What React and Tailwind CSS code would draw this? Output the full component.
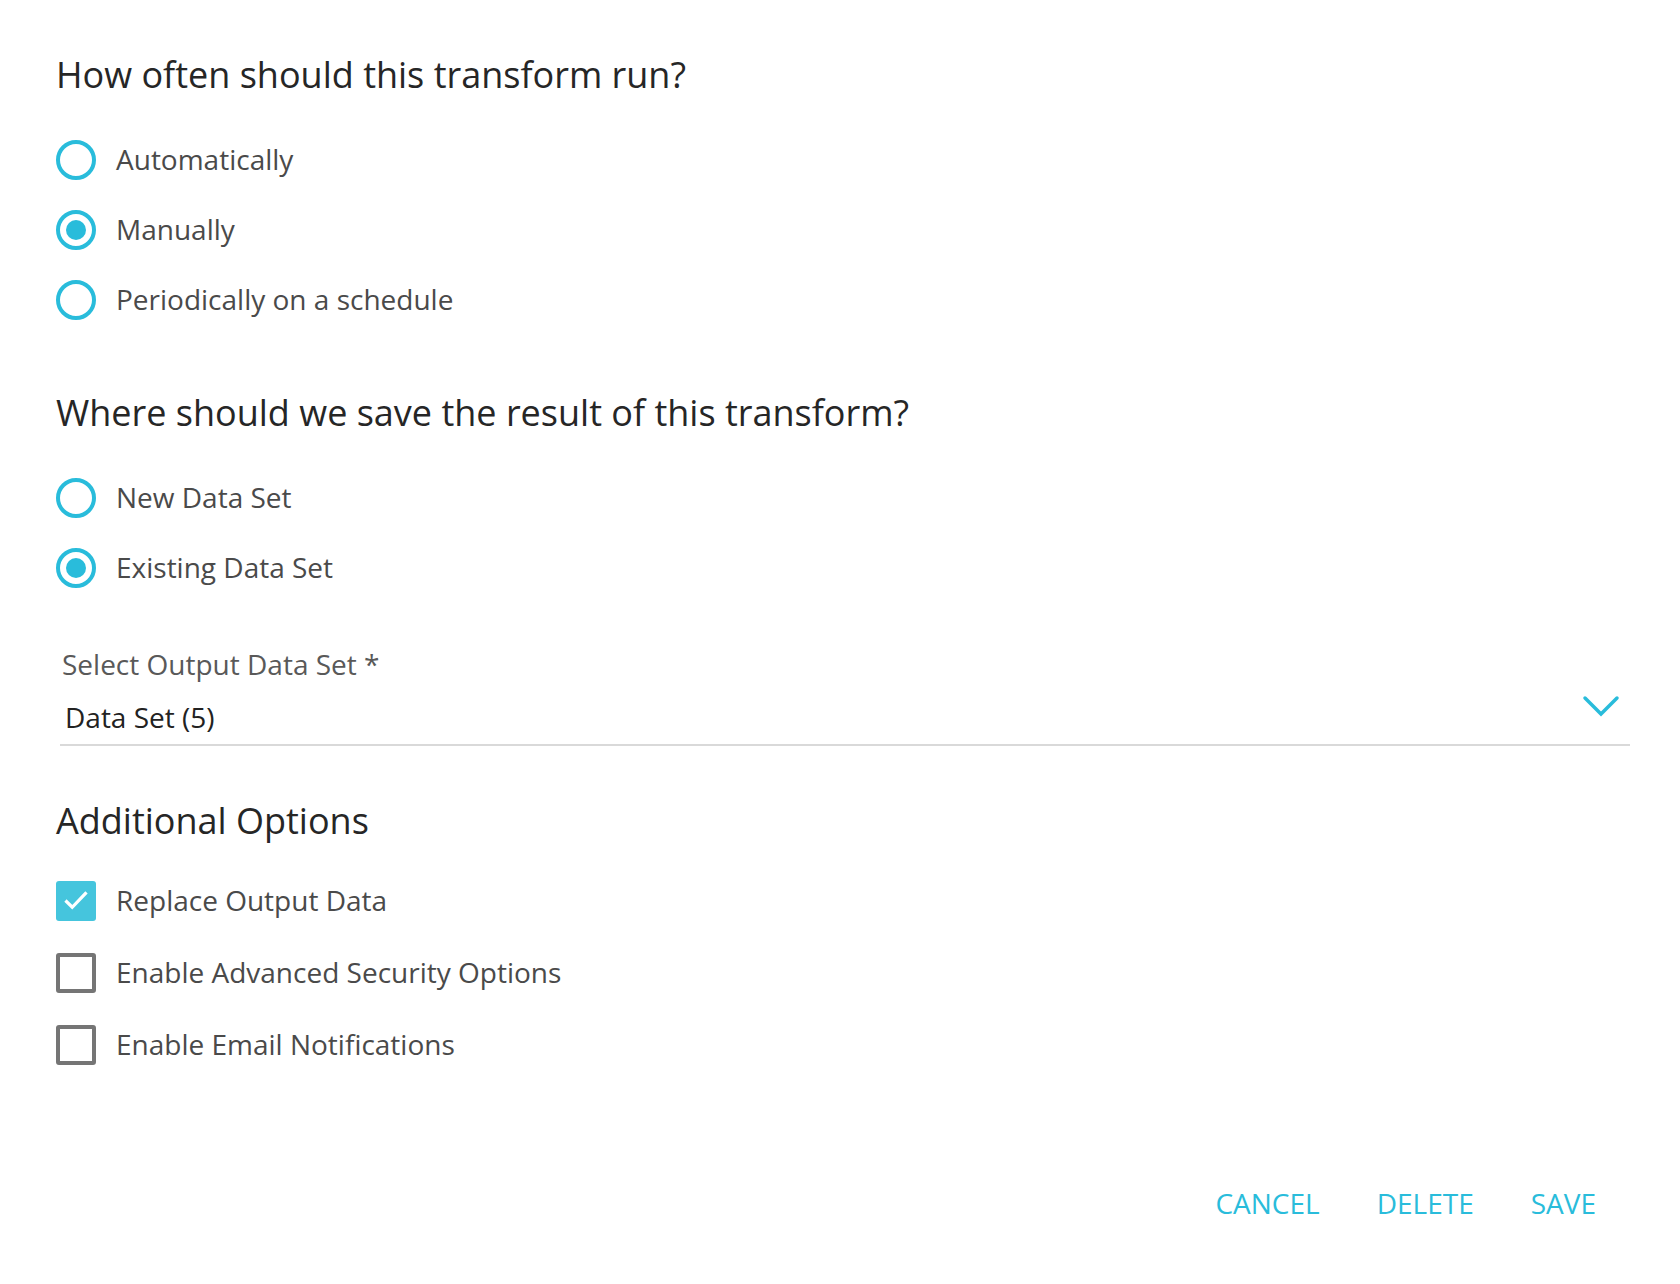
import { useState } from "react";

const CYAN = "#29bcdb";

const Radio = ({ label, checked, onClick }) => (
  <button type="button" onClick={onClick} className="flex h-[70px] items-center gap-[20px] text-left">
    <span className="flex h-[40px] w-[40px] items-center justify-center rounded-full border-[4px] border-[#29bcdb]">
      {checked && <span className="h-[20px] w-[20px] rounded-full bg-[#29bcdb]" />}
    </span>
    <span className="mt-[-2px] text-[28px] text-[#4a4a4a]">{label}</span>
  </button>
);

const Checkbox = ({ label, checked, onClick }) => (
  <button type="button" onClick={onClick} className="flex h-[72px] items-center gap-[20px] text-left">
    {checked ? (
      <span className="flex h-[40px] w-[40px] items-center justify-center rounded-[3px] bg-[#45c5dd]">
        <svg width="30" height="30" viewBox="0 0 24 24" fill="none" stroke="white" strokeWidth="2.6" strokeLinecap="square">
          <path d="M4.5 12.5l4.5 4.5L19.5 6" />
        </svg>
      </span>
    ) : (
      <span className="h-[40px] w-[40px] rounded-[3px] border-[4px] border-[#757575]" />
    )}
    <span className="mt-[-2px] text-[28px] text-[#4a4a4a]">{label}</span>
  </button>
);

const App = () => {
  const [runMode, setRunMode] = useState("manual");
  const [target, setTarget] = useState("existing");
  const [options, setOptions] = useState({ replace: true, security: false, email: false });

  const toggle = (key) => setOptions((prev) => ({ ...prev, [key]: !prev[key] }));

  return (
    <div className="h-[1284px] w-[1680px] bg-white pl-[56px] pt-[52px] font-['Open_Sans',sans-serif]">
      <h2 className="text-[36px] leading-[46px] text-[#262626]">How often should this transform run?</h2>
      <div className="mt-[27px] flex flex-col items-start">
        <Radio label="Automatically" checked={runMode === "auto"} onClick={() => setRunMode("auto")} />
        <Radio label="Manually" checked={runMode === "manual"} onClick={() => setRunMode("manual")} />
        <Radio
          label="Periodically on a schedule"
          checked={runMode === "schedule"}
          onClick={() => setRunMode("schedule")}
        />
      </div>

      <h2 className="mt-[55px] text-[36px] leading-[46px] text-[#262626]">
        Where should we save the result of this transform?
      </h2>
      <div className="mt-[27px] flex flex-col items-start">
        <Radio label="New Data Set" checked={target === "new"} onClick={() => setTarget("new")} />
        <Radio label="Existing Data Set" checked={target === "existing"} onClick={() => setTarget("existing")} />
      </div>

      <div className="ml-[4px] mt-[44px] w-[1570px] border-b-2 border-[#d9d9d9]">
        <p className="pl-[2px] text-[28px] leading-[34px] text-[#595959]">Select Output Data Set *</p>
        <div className="mt-[18px] flex h-[45px] items-start justify-between pb-[6px]">
          <span className="pl-[5px] text-[28px] leading-[36px] text-[#222]">Data Set (5)</span>
          <svg className="mr-[10px] mt-[-4px]" width="38" height="24" viewBox="0 0 38 24" fill="none" stroke={CYAN} strokeWidth="3.5" strokeLinecap="round">
            <path d="M3 3l16 16L35 3" />
          </svg>
        </div>
      </div>

      <h2 className="mt-[52px] text-[36px] leading-[46px] text-[#262626]">Additional Options</h2>
      <div className="mt-[21px] flex flex-col items-start">
        <Checkbox label="Replace Output Data" checked={options.replace} onClick={() => toggle("replace")} />
        <Checkbox
          label="Enable Advanced Security Options"
          checked={options.security}
          onClick={() => toggle("security")}
        />
        <Checkbox label="Enable Email Notifications" checked={options.email} onClick={() => toggle("email")} />
      </div>

      <div className="mt-[102px] flex justify-end gap-[57px] pr-[84px] text-[28px] leading-[40px] text-[#29bcdb]">
        <button type="button">CANCEL</button>
        <button type="button">DELETE</button>
        <button type="button">SAVE</button>
      </div>
    </div>
  );
};

export default App;
